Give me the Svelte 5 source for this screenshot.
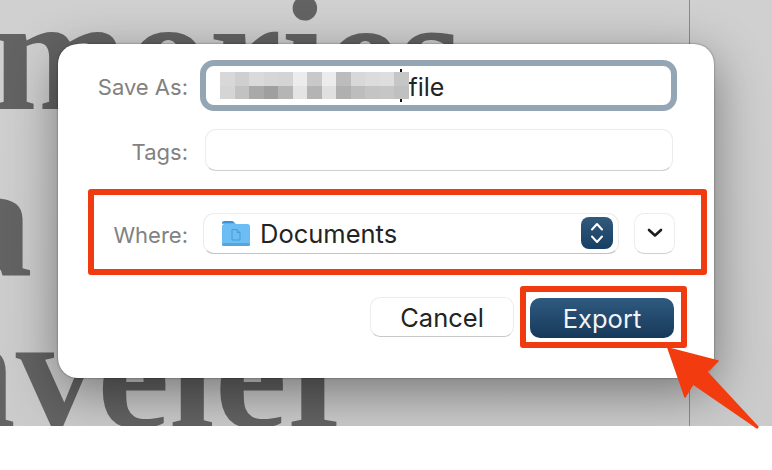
<script lang="ts">
	// Pixelated blur over the file name
	const blurTop = ['#d8d8d8', '#cfcfcf', '#dadada', '#d6d6d6', '#d4d4d4', '#ececec', '#c9c9c9', '#ececec', '#bcbcbc', '#d8d8d8', '#dcdcdc', '#dedede', '#c6c6c6'];
	const blurBottom = ['#d5d5d5', '#c2c2c2', '#a9a9a9', '#9f9f9f', '#b5b5b5', '#e4e4e4', '#b4b4b4', '#e0e0e0', '#b0b0b0', '#bdbdbd', '#c4c4c4', '#c6c6c6', '#c0c0c0'];
	const blurCells = [...blurTop, ...blurBottom];
</script>

<div class="shot">
	<div class="backdrop">
		<span class="word word-top">mories</span>
		<span class="word word-mid">a</span>
		<span class="word word-bottom">nveler</span>
		<span class="rule"></span>

		<div class="dialog">
			<div class="row">
				<span class="label">Save As:</span>
				<div class="name-field">
					<div class="blur">
						{#each blurCells as c}
							<span style="background: {c}"></span>
						{/each}
						<i class="caret"></i>
					</div>
					<span class="name-text">file</span>
				</div>
			</div>

			<div class="row tags-row">
				<span class="label">Tags:</span>
				<div class="tags-field"></div>
			</div>

			<div class="where-box">
				<span class="label">Where:</span>
				<div class="popup">
					<svg class="folder" width="30" height="28" viewBox="0 0 30 28">
						<path d="M1 4.5C1 2.8 1.8 2 3.5 2h7c1 0 1.6.3 2.3 1l2 1.8H1z" fill="#3a93d8" />
						<rect x="1" y="5" width="28" height="22" rx="2.5" fill="#6cbdf4" />
						<rect x="1" y="24" width="28" height="3" rx="1.5" fill="#55a5e0" />
						<path d="M11 10.5h5l3 3v7.5h-8z" fill="none" stroke="#4a9bd4" stroke-width="1" />
						<path d="M16 10.5v3h3" fill="none" stroke="#4a9bd4" stroke-width="1" />
					</svg>
					<span class="popup-text">Documents</span>
					<span class="stepper">
						<svg width="16" height="26" viewBox="0 0 16 26">
							<path d="M3 9.5 8 4l5 5.5M3 16.5 8 22l5-5.5" fill="none" stroke="#fff" stroke-width="2" stroke-linecap="round" stroke-linejoin="round" />
						</svg>
					</span>
				</div>
				<button class="expand">
					<svg width="16" height="10" viewBox="0 0 16 10">
						<path d="M2 2l6 5.5L14 2" fill="none" stroke="#1d1d1f" stroke-width="2.6" stroke-linecap="round" stroke-linejoin="round" />
					</svg>
				</button>
			</div>

			<div class="footer">
				<button class="cancel">Cancel</button>
				<div class="export-box">
					<button class="export">Export</button>
				</div>
			</div>
		</div>
	</div>

	<svg class="arrow" width="110" height="100" viewBox="0 0 110 100">
		<path d="M10 10 60 23 49 34 100 89 99 90 35 46 27 59z" fill="#f23c10" stroke="#f23c10" stroke-width="1.5" stroke-linejoin="round" />
	</svg>
</div>

<style>
	:global(body) {
		margin: 0;
		background: #fff;
	}

	.shot {
		position: relative;
		width: 772px;
		height: 470px;
		overflow: hidden;
		font-family: Inter, "Liberation Sans", sans-serif;
	}

	.backdrop {
		position: relative;
		width: 772px;
		height: 426px;
		overflow: hidden;
		background: linear-gradient(#d0d0d0, #cbcbcb);
	}

	.word {
		position: absolute;
		font-family: "Liberation Serif", serif;
		font-weight: 700;
		font-size: 163px;
		line-height: 1;
		color: #636363;
	}
	.word-top { left: -8px; top: -27px; }
	.word-mid { left: -49px; top: 139px; }
	.word-bottom { left: -75px; top: 291px; }

	.rule {
		position: absolute;
		left: 689px;
		top: 0;
		bottom: 0;
		width: 1px;
		background: #8a8a8a;
	}

	.dialog {
		position: absolute;
		left: 58px;
		top: 44px;
		width: 656px;
		height: 334px;
		box-sizing: border-box;
		padding: 16px 30px 0;
		background: #fff;
		border-radius: 20px;
		box-shadow: 0 0 2px rgba(0, 0, 0, 0.5), 0 14px 50px rgba(0, 0, 0, 0.42);
	}

	.label {
		box-sizing: border-box;
		color: #818181;
		font-size: 22px;
		text-align: right;
		flex-shrink: 0;
		width: 100px;
		padding-top: 3px;
	}

	.row {
		display: flex;
		align-items: center;
		gap: 12px;
	}

	.name-field {
		display: flex;
		align-items: center;
		box-sizing: border-box;
		width: 477px;
		height: 51px;
		padding-left: 14px;
		border: 6px solid #94a5b3;
		border-radius: 14px;
		background: #fff;
	}
	.blur {
		position: relative;
		z-index: 0;
		display: grid;
		grid-template-columns: repeat(13, 14.5px);
		grid-auto-rows: 13.5px;
		flex-shrink: 0;
	}
	.caret {
		position: absolute;
		z-index: -1;
		left: 180px;
		top: -3px;
		bottom: -3px;
		width: 1.5px;
		background: #111;
	}
	.name-text {
		font-size: 25px;
		color: #232323;
		padding-top: 3px;
	}

	.tags-row {
		margin-top: 18px;
	}
	.tags-field {
		box-sizing: border-box;
		width: 468px;
		height: 42px;
		margin-left: 5px;
		border: 1px solid #ececec;
		border-bottom-color: #cfcfcf;
		border-radius: 11px;
	}

	.where-box {
		display: flex;
		align-items: center;
		box-sizing: border-box;
		width: 619px;
		height: 86px;
		margin-top: 18px;
		padding-top: 2px;
		border: 6px solid #f03a10;
		border-radius: 3px;
	}
	.where-box .label {
		width: 94px;
	}

	.popup {
		display: flex;
		align-items: center;
		box-sizing: border-box;
		width: 416px;
		height: 41px;
		margin-left: 15px;
		padding: 0 5px 0 17px;
		border: 1px solid #ececec;
		border-bottom-color: #c4c4c4;
		border-radius: 11px;
	}
	.folder {
		flex-shrink: 0;
	}
	.popup-text {
		flex: 1;
		margin-left: 9px;
		font-size: 25.5px;
		color: #232323;
	}
	.stepper {
		display: flex;
		align-items: center;
		justify-content: center;
		width: 32px;
		height: 32px;
		border-radius: 8px;
		background: linear-gradient(#31597c, #173f63);
	}

	button {
		font-family: inherit;
		cursor: default;
		padding: 0;
	}

	.expand {
		display: flex;
		align-items: center;
		justify-content: center;
		width: 41px;
		height: 41px;
		margin-left: 15px;
		background: #fff;
		border: 1px solid #ececec;
		border-bottom-color: #cfcfcf;
		border-radius: 10px;
	}

	.footer {
		display: flex;
		align-items: center;
		justify-content: flex-end;
		width: 599px;
		margin-top: 11px;
	}
	.cancel {
		box-sizing: border-box;
		width: 144px;
		height: 40px;
		margin-right: 6px;
		background: #fff;
		border: 1px solid #ececec;
		border-bottom-color: #c8c8c8;
		border-radius: 10px;
		font-size: 25.5px;
		color: #232323;
	}
	.export-box {
		box-sizing: border-box;
		width: 167px;
		height: 62px;
		padding: 6px 7px 0 4px;
		border: 6px solid #f03a10;
		border-radius: 3px;
	}
	.export {
		display: block;
		width: 144px;
		height: 40px;
		background: linear-gradient(#2f5a80, #16395a);
		border: none;
		border-radius: 10px;
		font-size: 25.5px;
		color: #f2f4f6;
	}

	.arrow {
		position: absolute;
		left: 658px;
		top: 338px;
		overflow: visible;
	}
</style>
